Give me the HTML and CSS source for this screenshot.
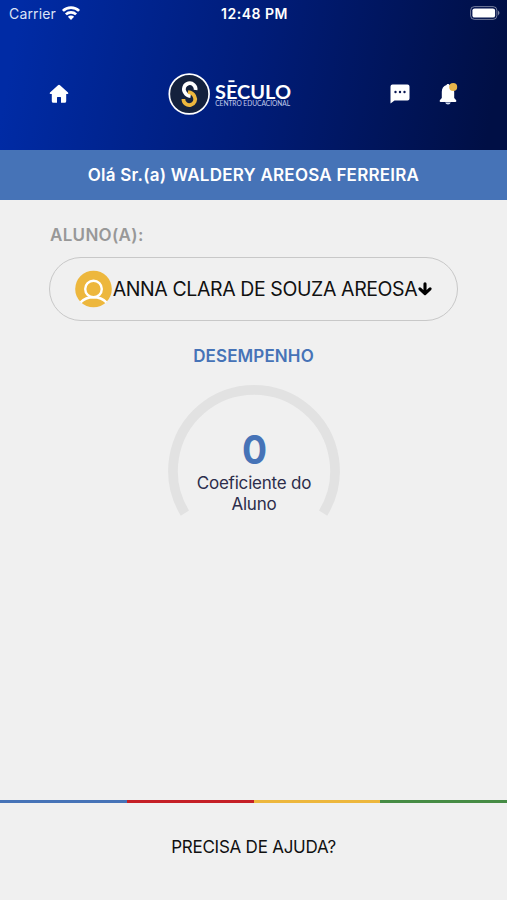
FILE: index.html
```html
<!DOCTYPE html>
<html lang="pt-BR">
<head>
<meta charset="utf-8">
<title>Século Centro Educacional</title>
<link rel="stylesheet" href="styles.css">
</head>
<body>
<header class="header">
  <div class="status">
    <div class="carrier"><span class="carrier-name">Carrier</span>
      <svg class="wifi" width="18" height="14" viewBox="0 0 18 14"><g fill="none" stroke="#fff" stroke-width="2.7"><path d="M.9 4.900a11.500 11.500 0 0 1 16.200 0"/><path d="M3.900 8.400a7.300 7.300 0 0 1 10.200 0"/></g><path d="M9 13.900 5.900 10.800a4.400 4.400 0 0 1 6.200 0z" fill="#fff"/></svg>
    </div>
    <span class="time">12:48 PM</span>
    <svg class="battery" width="30" height="14" viewBox="0 0 30 14"><rect x=".6" y=".6" width="26.3" height="12.8" rx="3.8" fill="none" stroke="#fff" stroke-opacity=".45"/><rect x="2.4" y="2.4" width="22.7" height="9.2" rx="2.2" fill="#fff"/><path d="M28 4.600q3 2.400 0 4.800z" fill="#fff" fill-opacity=".5"/></svg>
  </div>
  <nav class="nav">
    <svg class="home" width="20" height="20" viewBox="0 0 20 20"><path d="M9 1.200q1-.9 2 0l8 7.400q1 1.200-.5 1.400h-1.300v7.200q0 1.600-1.600 1.600h-3.600v-5.200q0-.6-.6-.6H8.600q-.6 0-.6.6v5.200H4.400q-1.600 0-1.600-1.600V10H1.500Q0 9.800 1 8.600z" fill="#fff"/></svg>
    <svg class="logo" width="124" height="44" viewBox="0 0 124 44">
      <circle cx="21.200" cy="22" r="19.900" fill="#14213d" stroke="#fff" stroke-width="1.700"/>
      <g fill="none" stroke-width="3.700">
        <path d="M27.600 18A5.900 5.900 0 1 0 17 20.600Q18.600 23.600 22.600 24.200" stroke="#fff"/>
        <path d="M20 20.200Q25 20.800 26.400 24.200A5.900 5.900 0 1 1 15.400 27" stroke="#edb73d"/>
      </g>
      <text class="logo-name" x="47" y="27" textLength="76" lengthAdjust="spacingAndGlyphs">SECULO</text>
      <path d="M60.500 9.200h6" stroke="#fff" stroke-width="1.900"/>
      <text class="logo-sub" x="47.200" y="34.300" textLength="75" lengthAdjust="spacingAndGlyphs">CENTRO EDUCACIONAL</text>
    </svg>
    <svg class="chat" width="20" height="20" viewBox="0 0 20 20"><path d="M2.500.5h15q2 0 2 2v12q0 2-2 2H4.500L.5 19.600V2.500q0-2 2-2z" fill="#fff"/><g fill="#061451"><circle cx="5.500" cy="8" r="1.200"/><circle cx="10" cy="8" r="1.200"/><circle cx="14.500" cy="8" r="1.200"/></g></svg>
    <svg class="bell" width="20" height="24" viewBox="0 0 20 24"><path d="M9 1.900c.8 0 1.400.4 1.500 1.200 3.200.9 4.700 3.500 4.700 6.800v6l2 2.400q.6 1.700-.8 1.700H1.600Q.2 20 .8 18.300l2-2.400v-6c0-3.300 1.500-5.900 4.700-6.800.1-.8.700-1.200 1.500-1.200z" fill="#fff"/><path d="M6.200 20.600h5.600q-.6 2-2.800 2t-2.800-2z" fill="#d0dcf0"/><circle cx="14.200" cy="4.900" r="4" fill="#e8b54a"/></svg>
  </nav>
</header>
<div class="greeting"><span>Olá Sr.(a) WALDERY AREOSA FERREIRA</span></div>
<main class="content">
  <div class="label"><span>ALUNO(A):</span></div>
  <div class="student">
    <svg width="37" height="37" viewBox="0 0 37 37"><circle cx="18.500" cy="18" r="18.300" fill="#edb73d"/><g fill="none" stroke="#fff" stroke-width="2.400"><circle cx="18.500" cy="18" r="8.300"/><path d="M5.600 31.400Q10.500 26.300 18.500 26.300T31.400 31.400"/></g></svg>
    <span class="student-name">ANNA CLARA DE SOUZA AREOSA</span>
    <svg class="arrow" width="14" height="14" viewBox="0 0 14 14"><path d="M7 1.800v9.500M1.900 6.800 7 11.600l5.100-4.800" fill="none" stroke="#000" stroke-width="3.100" stroke-linecap="round" stroke-linejoin="round"/></svg>
  </div>
  <h2 class="title">DESEMPENHO</h2>
  <section class="gauge">
    <svg class="ring" width="172" height="134" viewBox="0 0 172 134"><path d="M16.900 130.100A81 81 0 1 1 155.100 130.100" fill="none" stroke="#e2e2e2" stroke-width="9.700"/></svg>
    <div class="gauge-text"><strong class="score">0</strong><p class="caption">Coeficiente do<br>Aluno</p></div>
  </section>
</main>
<div class="stripes"><i class="blue"></i><i class="red"></i><i class="yellow"></i><i class="green"></i></div>
<footer class="help"><span>PRECISA DE AJUDA?</span></footer>
</body>
</html>
```

FILE: styles.css
```css
* { box-sizing: border-box; }
body {
  margin: 0;
  height: 900px;
  display: flex;
  flex-direction: column;
  background: #f0f0f0;
  font-family: Inter, "Liberation Sans", sans-serif;
  color: #111;
  overflow: hidden;
}
svg { display: block; flex: none; overflow: visible; }
.header {
  height: 150px;
  background: linear-gradient(100deg, #002ba5 4%, #001c78 50%, #000f45 96%);
  color: #fff;
}
.status {
  height: 27px;
  padding: 0 7px 0 9px;
  display: grid;
  grid-template-columns: 1fr auto 1fr;
  align-items: center;
}
.carrier { display: flex; align-items: center; gap: 6px; }
.carrier-name { font-size: 14px; letter-spacing: .15px; color: #dce3f6; }
.wifi { margin-top: -1px; }
.time { font-size: 14px; font-weight: 600; letter-spacing: .5px; }
.battery { justify-self: end; margin-top: -1px; }
.nav {
  height: 44px;
  margin-top: 45px;
  padding: 0 48px 0 49px;
  display: flex;
  align-items: center;
}
.logo { margin-left: 99px; }
.logo-name { font: 700 19.500px Lato, sans-serif; fill: #fff; }
.logo-sub { font: 400 7.500px Lato, sans-serif; fill: #c3cdec; }
.chat { margin-left: 98px; }
.bell { margin-left: 29px; }
.greeting {
  height: 50px;
  display: flex;
  align-items: center;
  justify-content: center;
  background: #4673b7;
  color: #fff;
  font-size: 17px;
  font-weight: 600;
  letter-spacing: .23px;
}
.content { flex: 1; padding: 24px 49px 0; display: flex; flex-direction: column; }
.label { font-size: 17px; line-height: 22px; font-weight: 600; color: #989898; padding-left: 1px; letter-spacing: .3px; }
.student {
  height: 64px;
  margin-top: 11px;
  border: 1.500px solid #c8c8c8;
  border-radius: 32px;
  display: flex;
  align-items: center;
  justify-content: center;
}
.student-name { font-size: 19.500px; letter-spacing: -.4px; white-space: nowrap; margin-left: .5px; }
.arrow { margin-left: .5px; }
.title {
  margin: 24px 0 0;
  font-size: 17px;
  line-height: 22px;
  font-weight: 600;
  text-align: center;
  letter-spacing: .12px;
  color: #4673b7;
}
.gauge { margin-top: 16px; display: grid; justify-content: center; }
.ring, .gauge-text { grid-area: 1 / 1; }
.ring { margin-top: -.5px; }
.gauge-text { text-align: center; padding: 44px 0 0 1px; }
.score { display: block; font-size: 40px; line-height: 46px; font-weight: 700; color: #4673b7; transform: scaleX(.93); }
.caption { margin: 0; font-size: 17px; line-height: 21px; letter-spacing: -.2px; color: #2c2d4b; }
.stripes { height: 3px; display: grid; grid-template-columns: repeat(4, 1fr); }
.blue { background: #4673b7; }
.red { background: #c51f26; }
.yellow { background: #edb73d; }
.green { background: #468c45; }
.help {
  height: 97px;
  display: flex;
  justify-content: center;
  padding-top: 33px;
  font-size: 17px;
  line-height: 22px;
  letter-spacing: -.24px;
}
```
